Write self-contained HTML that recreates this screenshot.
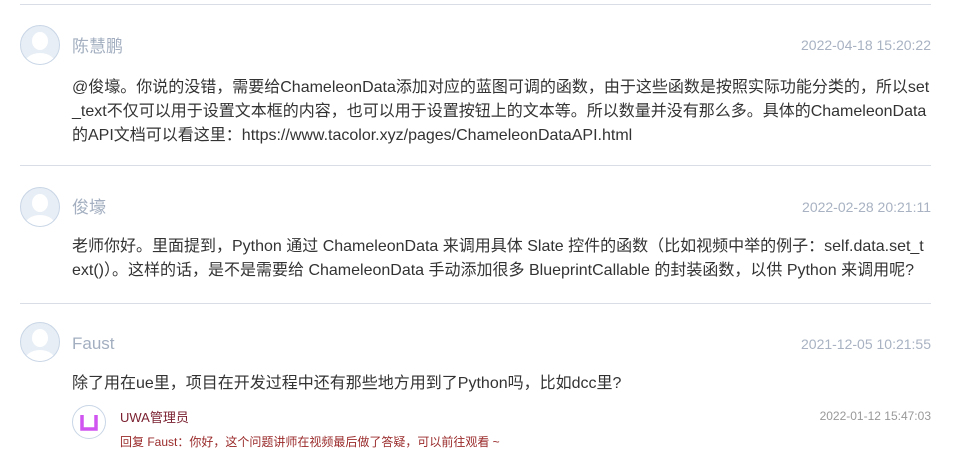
<!DOCTYPE html>
<html><head><meta charset="utf-8"><style>
body{margin:0;width:963px;height:475px;background:#fff;font-family:"Liberation Sans","Noto Sans CJK SC",sans-serif;position:relative;overflow:hidden}
.a{position:absolute}
.hr{position:absolute;left:20px;width:911px;height:1px;background:#d8dde6}
.av{position:absolute;left:20px;width:38px;height:38px;border:1px solid #c9d6e6;border-radius:50%;background:#e8eef5;overflow:hidden}
.av:before{content:"";position:absolute;left:11px;top:6px;width:16px;height:18px;border-radius:50%;background:#fff}
.av:after{content:"";position:absolute;left:3px;top:27px;width:32px;height:24px;border-radius:50% 50% 0 0;background:#fff}
.nm{position:absolute;left:72px;font-size:17px;color:#a3afc0;line-height:20px}
.dt{position:absolute;right:32px;font-size:14px;color:#a8b2c2;line-height:16px}
.tx{position:absolute;left:72px;width:862px;font-size:16px;color:#333;line-height:24px}
</style></head><body>
<div class="hr" style="top:4px"></div>
<div class="av" style="top:25px"></div>
<div class="nm" style="top:37px">陈慧鹏</div>
<div class="dt" style="top:37px">2022-04-18 15:20:22</div>
<div class="tx" style="top:76px">@俊壕。你说的没错，需要给ChameleonData添加对应的蓝图可调的函数，由于这些函数是按照实际功能分类的，所以set<br>_text不仅可以用于设置文本框的内容，也可以用于设置按钮上的文本等。所以数量并没有那么多。具体的ChameleonData<br>的API文档可以看这里：https://www.tacolor.xyz/pages/ChameleonDataAPI.html</div>
<div class="hr" style="top:165px"></div>
<div class="av" style="top:187px"></div>
<div class="nm" style="top:198px">俊壕</div>
<div class="dt" style="top:199px">2022-02-28 20:21:11</div>
<div class="tx" style="top:235px">老师你好。里面提到，Python 通过 ChameleonData 来调用具体 Slate 控件的函数（比如视频中举的例子：self.data.set_t<br>ext()）。这样的话，是不是需要给 ChameleonData 手动添加很多 BlueprintCallable 的封装函数，以供 Python 来调用呢?</div>
<div class="hr" style="top:303px"></div>
<div class="av" style="top:322px"></div>
<div class="nm" style="top:334px">Faust</div>
<div class="dt" style="top:336px">2021-12-05 10:21:55</div>
<div class="tx" style="top:372px">除了用在ue里，项目在开发过程中还有那些地方用到了Python吗，比如dcc里?</div>
<div class="a" style="left:72px;top:405px;width:32px;height:32px;border:1px solid #c9d6e6;border-radius:50%;background:#fff">
<svg width="32" height="32" viewBox="0 0 32 32"><path d="M9 9V23H23V9" fill="none" stroke="#d055f0" stroke-width="3.5"/></svg></div>
<div class="a" style="left:120px;top:407px;font-size:13px;color:#7a2030">UWA管理员</div>
<div class="a" style="right:32px;top:409px;font-size:12px;color:#999">2022-01-12 15:47:03</div>
<div class="a" style="left:120px;top:433px;font-size:12px;color:#9a2a2a">回复 Faust：你好，这个问题讲师在视频最后做了答疑，可以前往观看 ~</div>
</body></html>
